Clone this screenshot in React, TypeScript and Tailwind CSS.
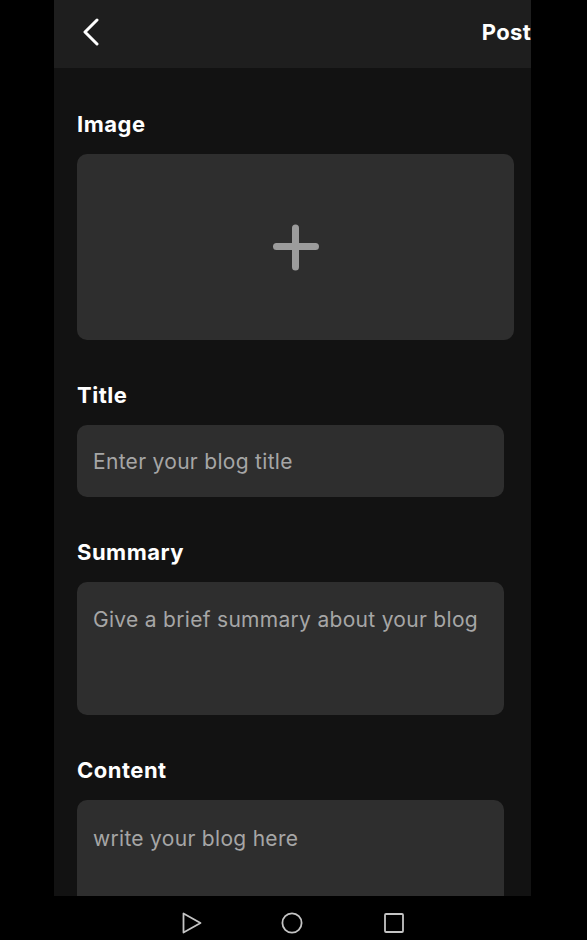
import { useState } from 'react';

const font = { fontFamily: 'Inter, "Noto Sans", sans-serif' };

function Field({ label, children }: { label: string; children: React.ReactNode }) {
  return (
    <div className="flex flex-col">
      <label className="text-[22px] font-bold leading-[28px] tracking-[0.5px] text-white">{label}</label>
      <div className="mt-4">{children}</div>
    </div>
  );
}

export default function App() {
  const [title, setTitle] = useState('');
  const [summary, setSummary] = useState('');
  const [content, setContent] = useState('');

  return (
    <div className="flex h-screen w-full flex-col overflow-hidden bg-black" style={font}>
      <div className="flex min-h-0 flex-1">
        <div className="ml-[54px] flex w-[477px] flex-col bg-[#121212]">
          {/* Header */}
          <header className="flex h-[68px] shrink-0 items-center justify-between bg-[#1e1e1e] pb-[4px] pl-[27px]">
            <button className="flex h-[32px] w-[24px] items-center">
              <svg width="20" height="28" viewBox="0 0 20 28" fill="none">
                <polyline
                  points="16,2 4,14 16,26"
                  stroke="white"
                  strokeWidth="3"
                  strokeLinecap="round"
                  strokeLinejoin="round"
                />
              </svg>
            </button>
            <button className="text-[22px] font-bold leading-none tracking-[0.3px] text-white">Post</button>
          </header>

          {/* Form */}
          <div className="flex flex-col gap-[41px] pl-[23px] pt-[42px]">
            <Field label="Image">
              <button className="flex h-[186px] w-[437px] items-center justify-center rounded-[10px] bg-[#2e2e2e]">
                <svg width="48" height="48" viewBox="0 0 48 48" fill="none">
                  <path
                    d="M23.5 5v39M4.5 23.5h39"
                    stroke="#9c9c9c"
                    strokeWidth="7"
                    strokeLinecap="round"
                  />
                </svg>
              </button>
            </Field>

            <Field label="Title">
              <input
                value={title}
                onChange={(e) => setTitle(e.target.value)}
                placeholder="Enter your blog title"
                className="h-[72px] w-[427px] rounded-[10px] bg-[#2e2e2e] px-4 text-[21px] leading-[24px] tracking-[0.3px] text-white outline-none placeholder:text-[#a6a6a6]"
              />
            </Field>

            <Field label="Summary">
              <textarea
                value={summary}
                onChange={(e) => setSummary(e.target.value)}
                placeholder="Give a brief summary about your blog"
                className="block h-[133px] w-[427px] resize-none rounded-[10px] bg-[#2e2e2e] px-4 pt-[26px] text-[21px] leading-[24px] tracking-[0.3px] text-white outline-none placeholder:text-[#a6a6a6]"
              />
            </Field>

            <Field label="Content">
              <textarea
                value={content}
                onChange={(e) => setContent(e.target.value)}
                placeholder="write your blog here"
                className="block h-[240px] w-[427px] resize-none rounded-[10px] bg-[#2e2e2e] px-4 pt-[27px] text-[21px] leading-[24px] tracking-[0.3px] text-white outline-none placeholder:text-[#a6a6a6]"
              />
            </Field>
          </div>
        </div>
      </div>

      {/* Android nav bar */}
      <nav className="flex h-[44px] shrink-0 items-start bg-black pl-[182px] pt-[16px]">
        <svg width="20" height="22" viewBox="0 0 20 22" fill="none">
          <path d="M1.5 1.5v19l17-9.5z" stroke="#c4c4c4" strokeWidth="1.8" strokeLinejoin="round" />
        </svg>
        <svg width="22" height="22" viewBox="0 0 22 22" fill="none" className="ml-[79px]">
          <circle cx="11" cy="11" r="9.6" stroke="#c4c4c4" strokeWidth="1.8" />
        </svg>
        <svg width="20" height="20" viewBox="0 0 20 20" fill="none" className="ml-[81px] mt-[1px]">
          <rect x="1" y="1" width="18" height="18" rx="1" stroke="#c4c4c4" strokeWidth="1.8" />
        </svg>
      </nav>
    </div>
  );
}
